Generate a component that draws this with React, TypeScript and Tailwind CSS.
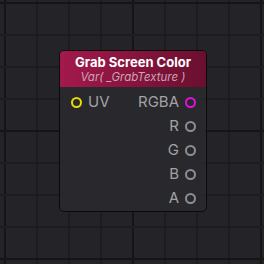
const vLines = [5, 37, 69, 101, 133, 165, 197, 229, 261];
const hLines = [3, 35, 67, 99, 131, 163, 195, 227, 259];

const outputs = [
  { label: "RGBA", ring: "border-[#e010dc]" },
  { label: "R", ring: "border-[#8e8e92]" },
  { label: "G", ring: "border-[#8e8e92]" },
  { label: "B", ring: "border-[#8e8e92]" },
  { label: "A", ring: "border-[#8e8e92]" },
];

function Pin({ ring }: { ring: string }) {
  return <span className={`block w-[11px] h-[11px] shrink-0 rounded-full border-[2.5px] ${ring}`} />;
}

export default function App() {
  return (
    <div className="relative w-[264px] h-[264px] overflow-hidden bg-[#232328] font-['Inter',sans-serif]">
      {vLines.map((x, i) => (
        <div
          key={"v" + x}
          className={`absolute top-0 bottom-0 w-[2px] ${i % 4 === 0 ? "bg-[#151517]" : "bg-[#1d1d20]"}`}
          style={{ left: x - 1 }}
        />
      ))}
      {hLines.map((y, i) => (
        <div
          key={"h" + y}
          className={`absolute left-0 right-0 h-[2px] ${i % 4 === 0 ? "bg-[#151517]" : "bg-[#1d1d20]"}`}
          style={{ top: y - 1 }}
        />
      ))}

      {/* node */}
      <div className="absolute left-[59px] top-[50px] w-[148px] h-[162px] rounded-[5px] border border-[#0b0b0c] bg-[#2a2a2e]/90 overflow-hidden flex flex-col">
        <div className="h-[36px] bg-[linear-gradient(to_right,#a3194c,#6a0f2f)] flex flex-col items-center pt-[3px]">
          <div className="text-[13px] leading-[17px] font-bold text-white">Grab Screen Color</div>
          <div className="text-[11.5px] leading-[13px] italic text-[#c9a3b3]">Var( _GrabTexture )</div>
        </div>
        <div className="relative flex-1">
          <div className="absolute left-[11px] top-[8px] flex items-center gap-[6px] h-[14px]">
            <Pin ring="border-[#e6dc00]" />
            <span className="text-[15px] text-[#a2a2a6]">UV</span>
          </div>
          <div className="flex flex-col items-end pr-[10px] pt-[8px] gap-[10px]">
            {outputs.map((o) => (
              <div key={o.label} className="flex items-center gap-[6px] h-[14px]">
                <span className="text-[15px] text-[#a2a2a6]">{o.label}</span>
                <Pin ring={o.ring} />
              </div>
            ))}
          </div>
        </div>
      </div>
    </div>
  );
}
